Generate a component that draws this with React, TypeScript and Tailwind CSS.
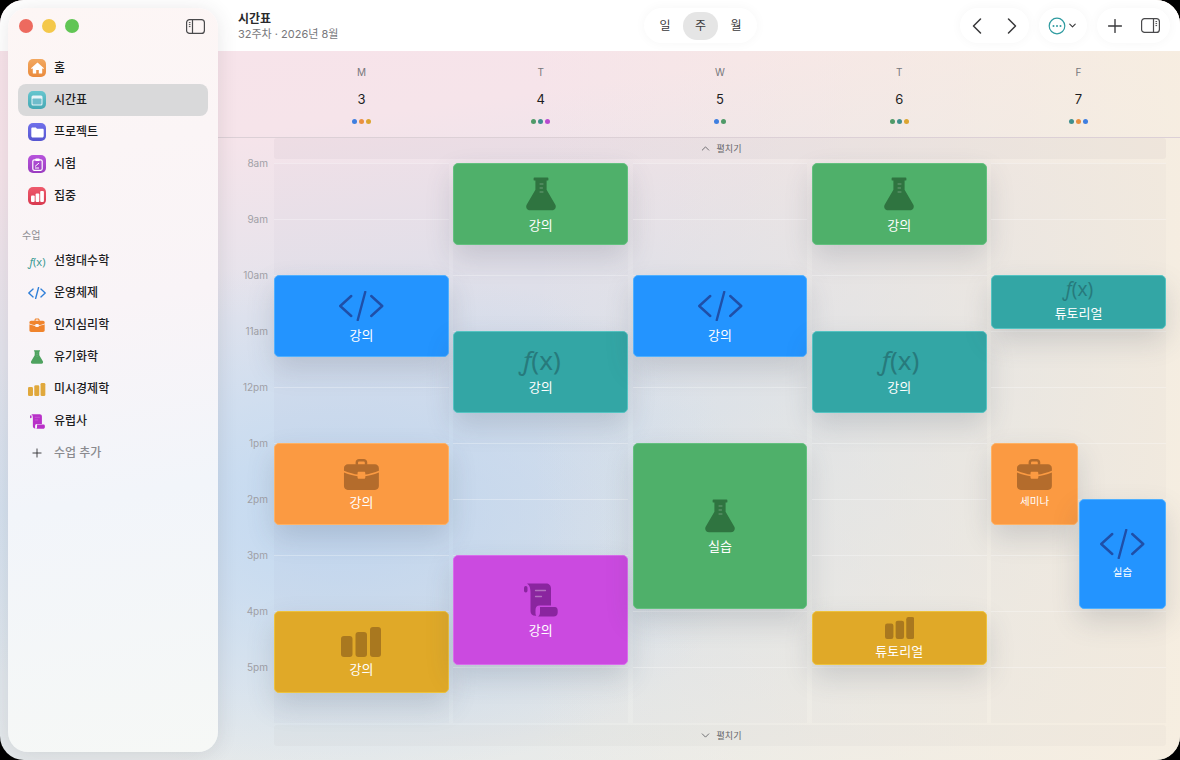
import React from "react";
import { ChevronLeft, ChevronRight, ChevronDown, ChevronUp, Plus } from "lucide-react";

type IconKind = "code" | "fx" | "bag" | "flask" | "bars" | "scroll";

function Flask({ size, className }: { size: number; className?: string }) {
  return (
    <svg width={size} height={size} viewBox="0 0 34 34" className={className}>
      <path
        fill="currentColor"
        d="M10.5 0.5h13a.9.9 0 0 1 .9.9v1.3a.9.9 0 0 1-.9.9h-.9v9.2l8.6 14.6c1.6 2.8-.2 5.9-3.3 5.9H6.1c-3.1 0-4.9-3.1-3.3-5.9l8.6-14.6V3.6h-.9a.9.9 0 0 1-.9-.9V1.4a.9.9 0 0 1 .9-.9z"
      />
      <path stroke="#ffffff" strokeOpacity="0.3" strokeWidth="1" strokeLinecap="round" d="M16 7h3M16 11h2.5M16 15h3" fill="none" />
    </svg>
  );
}

function Bag({ size, className }: { size: number; className?: string }) {
  return (
    <svg width={(size * 38) / 33} height={size} viewBox="0 0 38 33" className={className}>
      <path fill="currentColor" d="M13 7V4.5C13 2.6 14.6 1 16.5 1h5C23.4 1 25 2.6 25 4.500V7h-2.500V4.800c0-.8-.6-1.300-1.300-1.300h-4.400c-.7 0-1.300.5-1.300 1.300V7z" />
      <path fill="currentColor" d="M5 6.500h28c2.200 0 4 1.800 4 4v2.600c-5.500 2.300-11 3.600-14 3.900v-1.500c0-.8-.6-1.300-1.300-1.300h-5.400c-.7 0-1.300.5-1.300 1.300V17C12 16.700 6.500 15.400 1 13.100v-2.600c0-2.200 1.800-4 4-4z" />
      <path fill="currentColor" d="M1 15c5.500 2.200 11 3.500 14 3.800v1.400c0 .8.600 1.300 1.300 1.300h5.400c.7 0 1.300-.5 1.300-1.300v-1.400c3-.3 8.500-1.600 14-3.800v14c0 2.400-1.600 4-4 4H5c-2.400 0-4-1.600-4-4z" />
    </svg>
  );
}

function Bars({ size, className }: { size: number; className?: string }) {
  return (
    <svg width={(size * 4) / 3} height={size} viewBox="0 0 40 30" className={className}>
      <rect x="0" y="9" width="11.500" height="21" rx="3" fill="currentColor" />
      <rect x="14.500" y="5" width="11.500" height="25" rx="3" fill="currentColor" />
      <rect x="29" y="0" width="11" height="30" rx="3" fill="currentColor" />
    </svg>
  );
}

function Scroll({ size, className }: { size: number; className?: string }) {
  return (
    <svg width={size} height={size} viewBox="0 0 34 34" className={className}>
      <rect x="0" y="3" width="3.500" height="6.500" rx="1.700" fill="currentColor" />
      <path fill="currentColor" d="M3 0.500h19c3 0 5 2 5 5v17h-11.500c-2.800 0-4 1.800-4 4.500v3.500c0 1 .3 1.700.8 2.200C8.500 33 6.500 31 6.500 28V9.500C6.500 8 6.200 4 5 2.500 4.500 1.800 3.800 1.100 3 .5z" />
      <path fill="currentColor" d="M16 24h15c1.700 0 2.700 1.300 2.700 3.500v2c0 2.700-1.700 4-4 4H14c1.500-.8 2-2.500 2-4.500z" />
      <path stroke="#ffffff" strokeOpacity="0.35" strokeWidth="1.300" strokeLinecap="round" d="M11.500 7.500h10M11.500 13.500h6" fill="none" />
    </svg>
  );
}

function Code({ size, className, stroke = 2 }: { size: number; className?: string; stroke?: number }) {
  return (
    <svg width={size * 1.55} height={size} viewBox="0 0 46 30" className={className} fill="none" stroke="currentColor" strokeWidth={stroke} strokeLinecap="round" strokeLinejoin="round">
      <path d="M13 5 2 15l11 10M33 5l11 10-11 10M27 1 19.500 29" />
    </svg>
  );
}

function Fx({ size, className }: { size: number; className?: string }) {
  return (
    <span className={`flex items-center font-['Noto_Sans',sans-serif] leading-none ${className ?? ""}`} style={{ fontSize: size }}>
      <span className="italic">ƒ</span>
      <span>(x)</span>
    </span>
  );
}

function EventIcon({ kind, size }: { kind: IconKind; size: number }) {
  if (kind === "code") return <Code size={size} className="text-[#1f4fa8]" stroke={2.400} />;
  if (kind === "fx") return <Fx size={size} className="-translate-y-[2px] text-[#277a7c]" />;
  if (kind === "bag") return <Bag size={size} className="text-[#b46c2c]" />;
  if (kind === "flask") return <Flask size={size} className="text-[#2f7440]" />;
  if (kind === "bars") return <Bars size={size} className="text-[#a9781f]" />;
  return <Scroll size={size} className="text-[#8a259f]" />;
}

type Ev = {
  start: number;
  end: number;
  kind: IconKind;
  label: string;
  size: number;
  bg: string;
  small?: boolean;
  half?: "left" | "right";
  compact?: boolean;
};

const colors = {
  blue: "bg-[#2394ff] border-[#4fb0ff]",
  teal: "bg-[#33a6a5] border-[#55c3c2]",
  orange: "bg-[#fb9a42] border-[#ffb163]",
  green: "bg-[#4fb06a] border-[#63c07f]",
  gold: "bg-[#e0a928] border-[#edc23c]",
  purple: "bg-[#cb4ae0] border-[#d96bec]",
};

const days: { letter: string; num: number; dots: string[]; events: Ev[] }[] = [
  {
    letter: "M",
    num: 3,
    dots: ["bg-[#3f7fe0]", "bg-[#ea9040]", "bg-[#dca530]"],
    events: [
      { start: 112, end: 194, kind: "code", label: "강의", size: 30, bg: colors.blue },
      { start: 280, end: 362, kind: "bag", label: "강의", size: 32, bg: colors.orange },
      { start: 448, end: 530, kind: "bars", label: "강의", size: 30, bg: colors.gold },
    ],
  },
  {
    letter: "T",
    num: 4,
    dots: ["bg-[#4f9a68]", "bg-[#3f8f8e]", "bg-[#b84ad0]"],
    events: [
      { start: 0, end: 82, kind: "flask", label: "강의", size: 34, bg: colors.green },
      { start: 168, end: 250, kind: "fx", label: "강의", size: 26, bg: colors.teal },
      { start: 392, end: 502, kind: "scroll", label: "강의", size: 34, bg: colors.purple, compact: true },
    ],
  },
  {
    letter: "W",
    num: 5,
    dots: ["bg-[#3f7fe0]", "bg-[#4f9a68]"],
    events: [
      { start: 112, end: 194, kind: "code", label: "강의", size: 30, bg: colors.blue },
      { start: 280, end: 446, kind: "flask", label: "실습", size: 34, bg: colors.green, compact: true },
    ],
  },
  {
    letter: "T",
    num: 6,
    dots: ["bg-[#4f9a68]", "bg-[#3f8f8e]", "bg-[#dca530]"],
    events: [
      { start: 0, end: 82, kind: "flask", label: "강의", size: 34, bg: colors.green },
      { start: 168, end: 250, kind: "fx", label: "강의", size: 26, bg: colors.teal },
      { start: 448, end: 502, kind: "bars", label: "튜토리얼", size: 22, bg: colors.gold },
    ],
  },
  {
    letter: "F",
    num: 7,
    dots: ["bg-[#3f8f8e]", "bg-[#ea9040]", "bg-[#3f7fe0]"],
    events: [
      { start: 112, end: 166, kind: "fx", label: "튜토리얼", size: 19, bg: colors.teal },
      { start: 280, end: 362, kind: "bag", label: "세미나", size: 32, bg: colors.orange, small: true, half: "left" },
      { start: 336, end: 446, kind: "code", label: "실습", size: 30, bg: colors.blue, small: true, half: "right" },
    ],
  },
];

const hours = ["8am", "9am", "10am", "11am", "12pm", "1pm", "2pm", "3pm", "4pm", "5pm"];

function EventCard({ ev }: { ev: Ev }) {
  const pos =
    ev.half === "left" ? "left-0 w-[87px]" : ev.half === "right" ? "right-0 w-[87px]" : "inset-x-0";
  const tall = ev.kind === "code" || ev.kind === "flask" || ev.kind === "scroll";
  const spacing = ev.compact ? "gap-[4px] pt-[1px]" : tall ? "gap-[5px] pt-[2px]" : "gap-[3px]";
  return (
    <div
      className={`absolute ${pos} ${ev.bg} flex flex-col items-center justify-center rounded-[5px] border shadow-[0_12px_28px_rgba(60,70,90,0.18)] ${spacing}`}
      style={{ top: ev.start, height: ev.end - ev.start }}
    >
      <EventIcon kind={ev.kind} size={ev.size} />
      <span className={`leading-[18px] text-white ${ev.small ? "text-[10.500px]" : "text-[13px]"}`}>{ev.label}</span>
    </div>
  );
}

function Pill({ className, children }: { className: string; children: React.ReactNode }) {
  return (
    <div className={`flex h-[35px] items-center rounded-full bg-white shadow-[0_0_12px_rgba(0,0,0,0.04)] ${className}`}>{children}</div>
  );
}

function SquareIcon({ bg, children }: { bg: string; children: React.ReactNode }) {
  return <span className={`flex h-[18px] w-[18px] items-center justify-center rounded-[5px] ${bg}`}>{children}</span>;
}

function NavRow({ icon, label, active, muted }: { icon: React.ReactNode; label: string; active?: boolean; muted?: boolean }) {
  return (
    <div className={`flex h-[32px] items-center gap-[8px] rounded-[8px] pl-[10px] ${active ? "bg-[#d9d9da]" : ""}`}>
      <span className="flex w-[18px] shrink-0 items-center justify-center">{icon}</span>
      <span className={`text-[12px] font-medium ${muted ? "text-[#8a8a8e]" : "text-[#1d1d1f]"}`}>{label}</span>
    </div>
  );
}

const topNav = [
  {
    label: "홈",
    icon: (
      <SquareIcon bg="bg-[linear-gradient(#f2a860,#ea8a3c)]">
        <svg width="13" height="12" viewBox="0 0 13 12"><path fill="#fff" d="M6.500.5 13 6.200l-.8.800-1-.8V11a.6.6 0 0 1-.6.6H7.800V8H5.200v3.600H2.400a.6.6 0 0 1-.6-.6V6.200l-1 .8L0 6.200z" /></svg>
      </SquareIcon>
    ),
  },
  {
    label: "시간표",
    active: true,
    icon: (
      <SquareIcon bg="bg-[linear-gradient(#66c6cf,#45a8b4)]">
        <svg width="12" height="11" viewBox="0 0 12 11"><rect x=".5" y=".5" width="11" height="10" rx="1.500" fill="#e8f4f8" /><rect x="1.500" y="3.500" width="9" height="6" rx=".8" fill="#6fbccb" /></svg>
      </SquareIcon>
    ),
  },
  {
    label: "프로젝트",
    icon: (
      <SquareIcon bg="bg-[linear-gradient(#7070ea,#5656d0)]">
        <svg width="13" height="11" viewBox="0 0 13 11"><path fill="#fff" d="M1.500.5h3.300l1.200 1.300h5.500c.7 0 1.200.5 1.200 1.200V9c0 .9-.6 1.500-1.500 1.500H1.800C.9 10.500.3 9.900.3 9V1.700C.3 1 .8.500 1.500.500z" /></svg>
      </SquareIcon>
    ),
  },
  {
    label: "시험",
    icon: (
      <SquareIcon bg="bg-[linear-gradient(#b754dc,#9b3cc0)]">
        <svg width="11" height="13" viewBox="0 0 11 13"><rect x=".8" y="1.800" width="9.400" height="10.500" rx="1.500" fill="none" stroke="#fff" strokeWidth="1.200" /><rect x="3.300" y=".5" width="4.400" height="2.500" rx=".8" fill="#fff" /><path d="M3 8.500 7 5M3 10h4" stroke="#fff" strokeWidth="1" /></svg>
      </SquareIcon>
    ),
  },
  {
    label: "집중",
    icon: (
      <SquareIcon bg="bg-[linear-gradient(#ee5a6c,#d93a50)]">
        <svg width="13" height="11" viewBox="0 0 13 11"><rect x="0" y="4.500" width="3.700" height="6.500" rx="1" fill="#fff" /><rect x="4.600" y="2.500" width="3.700" height="8.500" rx="1" fill="#fff" /><rect x="9.200" y="0" width="3.700" height="11" rx="1" fill="#fff" /></svg>
      </SquareIcon>
    ),
  },
];

const courses = [
  { label: "선형대수학", icon: <Fx size={11} className="text-[#3a9a94]" /> },
  { label: "운영체제", icon: <Code size={12} className="text-[#2f7fd8]" stroke={3.500} /> },
  { label: "인지심리학", icon: <Bag size={14} className="text-[#f0842c]" /> },
  { label: "유기화학", icon: <Flask size={14} className="text-[#4ea25f]" /> },
  { label: "미시경제학", icon: <Bars size={13} className="text-[#e0a83c]" /> },
  { label: "유럽사", icon: <Scroll size={15} className="text-[#b830c8]" /> },
];

function PanelIcon({ side }: { side: "left" | "right" }) {
  const x = side === "left" ? 6.500 : 12.500;
  const dotX = side === "left" ? 3.700 : 15.300;
  return (
    <svg width="19" height="15" viewBox="0 0 19 15" fill="none" stroke="#4a4a4c" strokeWidth="1.200">
      <rect x=".6" y=".6" width="17.800" height="13.800" rx="3" />
      <path d={`M${x} .6v13.800`} />
      <path d={`M${dotX - 0.8} 3.600h1.600M${dotX - 0.8} 5.600h1.600M${dotX - 0.8} 7.600h1.600`} strokeWidth="1" />
    </svg>
  );
}

function Dots() {
  return (
    <svg width="18" height="18" viewBox="0 0 18 18" fill="none">
      <circle cx="9" cy="9" r="7.800" stroke="#2f9ba0" strokeWidth="1.200" />
      <circle cx="5.500" cy="9" r="1" fill="#2f9ba0" />
      <circle cx="9" cy="9" r="1" fill="#2f9ba0" />
      <circle cx="12.500" cy="9" r="1" fill="#2f9ba0" />
    </svg>
  );
}

export default function App() {
  return (
    <div className="h-[760px] w-[1180px] overflow-hidden bg-black font-['Inter','Noto_Sans_CJK_KR',sans-serif]">
      <div className="relative flex h-full flex-col overflow-hidden rounded-[24px] bg-[radial-gradient(ellipse_420px_260px_at_340px_520px,#c3d9f1_0%,rgba(195,217,241,0)_100%),linear-gradient(172deg,#f8e3ea_0%,#f6e4ea_18%,#e3e3ec_38%,#d9e3ee_55%,#e1e7ec_75%,#edede8_100%)]">
        <div className="pointer-events-none absolute inset-0 bg-[linear-gradient(90deg,rgba(255,255,255,0)_45%,rgba(247,238,224,0.92)_100%)]" />

        {/* Header */}
        <header className="relative flex h-[51px] shrink-0 items-center justify-between bg-white pl-[238px] pr-[10px]">
          <div className="flex w-[406px] flex-col pt-[1px]">
            <span className="text-[12px] font-semibold leading-[16px] text-[#2a2a2c]">시간표</span>
            <span className="text-[11px] leading-[14px] text-[#77777b]">32주차 · 2026년 8월</span>
          </div>
          <Pill className="w-[113px] justify-between px-[3px]">
            <span className="w-[36px] text-center text-[12px] text-[#3a3a3c]">일</span>
            <span className="flex h-[28px] w-[35px] items-center justify-center rounded-full bg-[#e5e5e5] text-[12px] text-[#3a3a3c]">주</span>
            <span className="w-[36px] text-center text-[12px] text-[#3a3a3c]">월</span>
          </Pill>
          <div className="ml-auto flex items-center gap-[10px]">
            <Pill className="w-[69px] justify-between px-[3px]">
              <ChevronLeft size={28} strokeWidth={1.300} color="#3a3a3c" />
              <ChevronRight size={28} strokeWidth={1.300} color="#3a3a3c" />
            </Pill>
            <Pill className="w-[48px] justify-center gap-[1px]">
              <Dots />
              <ChevronDown size={11} strokeWidth={2.400} color="#3a3a3c" />
            </Pill>
            <Pill className="w-[73px] justify-between pl-[7px] pr-[10px]">
              <Plus size={22} strokeWidth={1.500} color="#3a3a3c" />
              <PanelIcon side="right" />
            </Pill>
          </div>
        </header>

        {/* Main */}
        <main className="relative flex flex-1 flex-col pl-[218px]">
          <div className="flex h-[87px] shrink-0 border-b border-[#dcd0d6] pl-[56px]">
            <div className="grid w-[892px] grid-cols-5 gap-x-[4.400px]">
              {days.map((d, i) => (
                <div key={i} className="flex flex-col items-center">
                  <span className="mt-[15px] text-[10px] leading-[12px] text-[#77777b]">{d.letter}</span>
                  <span className="mt-[13px] text-[13px] leading-[16px] text-[#1d1d1f]">{d.num}</span>
                  <span className="mt-[12px] flex gap-[2px]">
                    {d.dots.map((c, j) => (
                      <span key={j} className={`h-[5px] w-[5px] rounded-full ${c}`} />
                    ))}
                  </span>
                </div>
              ))}
            </div>
          </div>

          <div className="ml-[56px] flex h-[21px] w-[892px] items-center justify-center gap-[5px] rounded-[3px] bg-[rgba(120,100,120,0.05)]">
            <ChevronUp size={13} strokeWidth={1.500} color="#55555a" />
            <span className="text-[9px] text-[#66666a]">펼치기</span>
          </div>

          <div className="mt-[4px] flex">
            <div className="-mt-[5px] w-[50px] shrink-0">
              {hours.map((h) => (
                <div key={h} className="h-[56px] text-right text-[10px] leading-[10px] text-[#a0a0a6]">
                  {h}
                </div>
              ))}
            </div>
            <div className="ml-[6px] grid w-[892px] grid-cols-5 gap-x-[4.400px]">
              {days.map((d, i) => (
                <div key={i} className="relative">
                  {hours.map((h) => (
                    <div key={h} className="h-[56px] border-t border-white/30 bg-[rgba(90,90,110,0.025)]" />
                  ))}
                  {d.events.map((ev, j) => (
                    <EventCard key={j} ev={ev} />
                  ))}
                </div>
              ))}
            </div>
          </div>

          <div className="ml-[56px] mt-[2px] flex h-[21px] w-[892px] items-center justify-center gap-[5px] rounded-[3px] bg-[rgba(120,120,120,0.04)]">
            <ChevronDown size={13} strokeWidth={1.500} color="#55555a" />
            <span className="text-[9px] text-[#66666a]">펼치기</span>
          </div>
        </main>

        {/* Floating sidebar */}
        <aside className="absolute bottom-[8px] left-[8px] top-[8px] w-[210px] rounded-[20px] bg-[linear-gradient(170deg,#fdf6f5_0%,#f9f4f7_40%,#f2f5fa_65%,#f6f8f6_100%)] px-[10px] shadow-[0_2px_20px_rgba(60,50,60,0.12)]">
          <div className="flex h-[36px] items-center justify-between pl-[1px] pr-[3px]">
            <div className="flex gap-[9px]">
              <span className="h-[14px] w-[14px] rounded-full bg-[#ed6a5f]" />
              <span className="h-[14px] w-[14px] rounded-full bg-[#f4c84a]" />
              <span className="h-[14px] w-[14px] rounded-full bg-[#61c554]" />
            </div>
            <PanelIcon side="left" />
          </div>
          <nav className="mt-[8px]">
            {topNav.map((n) => (
              <NavRow key={n.label} icon={n.icon} label={n.label} active={n.active} />
            ))}
          </nav>
          <div className="mt-[13px] h-[20px] pl-[4px] text-[10px] leading-[20px] text-[#8e8e93]">수업</div>
          <nav>
            {courses.map((c) => (
              <NavRow key={c.label} icon={c.icon} label={c.label} />
            ))}
            <NavRow icon={<Plus size={14} strokeWidth={1.500} color="#2a2a2c" />} label="수업 추가" muted />
          </nav>
        </aside>
      </div>
    </div>
  );
}
